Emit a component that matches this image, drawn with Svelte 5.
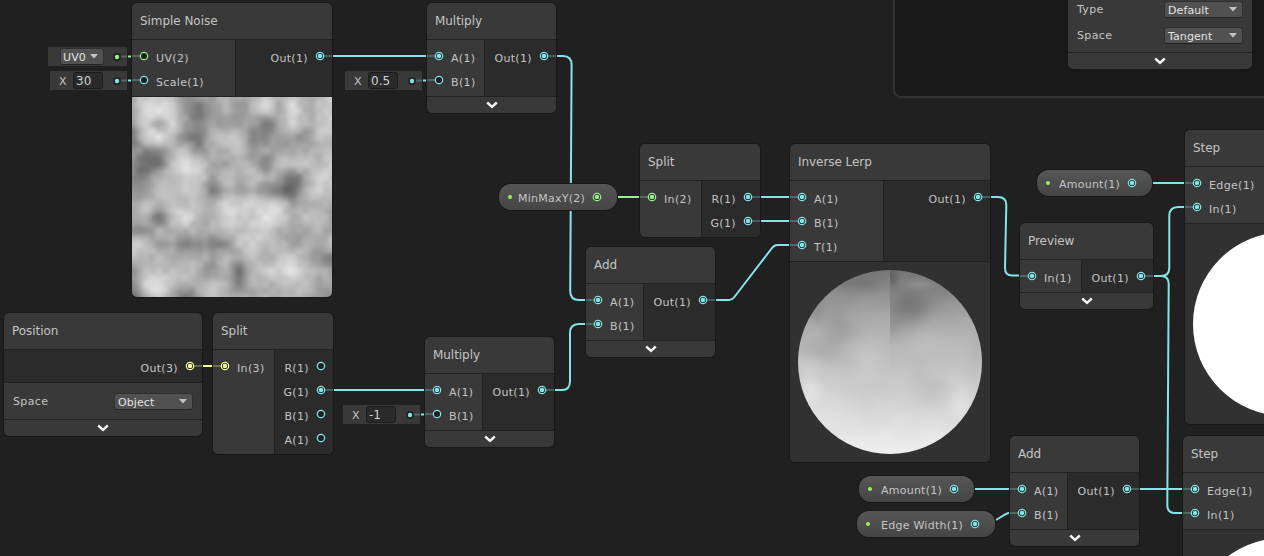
<script>
  import { onMount } from 'svelte';

  const CYAN = '#84e4e7';
  const GREEN = '#9aef92';
  const YELLOW = '#f6ff9a';

  const i = (label, o = {}) => ({ label, on: true, color: CYAN, ...o });

  const nodes = [
    { title: 'Simple Noise', x: 132, y: 3, w: 200, split: 103, ins: [i('UV(2)', { on: false, stub: true, color: GREEN }), i('Scale(1)', { on: false, stub: true })], outs: [i('Out(1)')], preview: 'noise' },
    { title: 'Multiply', x: 427, y: 3, w: 129, split: 57, ins: [i('A(1)'), i('B(1)', { on: false, stub: true })], outs: [i('Out(1)')], fold: true },
    { title: 'Split', x: 640, y: 144, w: 120, split: 61, ins: [i('In(2)', { color: GREEN })], outs: [i('R(1)'), i('G(1)')] },
    { title: 'Inverse Lerp', x: 790, y: 144, w: 200, split: 93, ins: [i('A(1)'), i('B(1)'), i('T(1)')], outs: [i('Out(1)')], preview: 'sphere' },
    { title: 'Add', x: 586, y: 247, w: 129, split: 57, ins: [i('A(1)'), i('B(1)')], outs: [i('Out(1)')], fold: true },
    { title: 'Position', x: 4, y: 313, w: 198, split: 0, ins: [], outs: [i('Out(3)', { color: YELLOW })], fields: [['Space', 'Object']], fold: true },
    { title: 'Split', x: 213, y: 313, w: 120, split: 61, ins: [i('In(3)', { color: YELLOW })], outs: [i('R(1)', { on: false }), i('G(1)'), i('B(1)', { on: false }), i('A(1)', { on: false })] },
    { title: 'Multiply', x: 425, y: 337, w: 129, split: 57, ins: [i('A(1)'), i('B(1)', { on: false, stub: true })], outs: [i('Out(1)')], fold: true },
    { title: 'Preview', x: 1020, y: 223, w: 133, split: 61, ins: [i('In(1)')], outs: [i('Out(1)')], fold: true },
    { title: 'Step', x: 1185, y: 130, w: 200, split: 103, ins: [i('Edge(1)'), i('In(1)')], outs: [], preview: 'white' },
    { title: 'Step', x: 1183, y: 436, w: 200, split: 103, ins: [i('Edge(1)'), i('In(1)')], outs: [], preview: 'white' },
    { title: 'Add', x: 1010, y: 436, w: 129, split: 57, ins: [i('A(1)'), i('B(1)')], outs: [i('Out(1)')], fold: true }
  ];

  const pills = [
    { label: 'MinMaxY(2)', x: 499, y: 184, w: 118, color: GREEN },
    { label: 'Amount(1)', x: 1037, y: 170, w: 115, color: CYAN },
    { label: 'Amount(1)', x: 859, y: 476, w: 115, color: CYAN },
    { label: 'Edge Width(1)', x: 857, y: 511, w: 138, color: CYAN }
  ];

  const slots = [
    { x: 48, y: 47, w: 79, menu: 'UV0', color: GREEN },
    { x: 50, y: 71, w: 77, value: '30', color: CYAN },
    { x: 345, y: 71, w: 77, value: '0.5', color: CYAN },
    { x: 343, y: 405, w: 77, value: '-1', color: CYAN }
  ];

  const wires = [
    { d: 'M333 56H426' },
    { d: 'M557 56H563Q571.6 56 571.6 65L570.2 291Q570.2 300 579 300H585' },
    { d: 'M555 390H562Q570 390 570 381V333Q570 324 579 324H585' },
    { d: 'M716 300H729Q732 300 734 297.500L772 248Q774.500 245 777 245H789' },
    { d: 'M618 197H639', c: GREEN },
    { d: 'M761 197H789' },
    { d: 'M761 221H789' },
    { d: 'M203 366H212', c: YELLOW },
    { d: 'M334 390H424' },
    { d: 'M991 197H998Q1006.300 197 1006.300 205L1005 268Q1005 275.500 1012 275.500H1019' },
    { d: 'M1154 276H1161Q1169.300 276 1169.300 268V216Q1169.300 207 1178 207H1184' },
    { d: 'M1154 276H1161Q1168.700 276 1168.700 284L1167.300 505Q1167.300 513 1175 513H1182' },
    { d: 'M1153 183H1184' },
    { d: 'M975 489H1009' },
    { d: 'M996 520L1006 514Q1008 513 1009 513' },
    { d: 'M1140 489H1182' }
  ];

  // brightness lattice of the noise preview, 0 dark to 9 light
  const lattice = [
    '6887445656868678',
    '6998424646869678',
    '5868535555258678',
    '2897326773355477',
    '4346746674555667',
    '3127985566377778',
    '3367885767652588',
    '4477873656421687',
    '5767776888885666',
    '5627966888986775',
    '4466666778865565',
    '8755343478775657',
    '7676665657678643',
    '4777764626889765',
    '3897667636677755',
    '1685257665666653'
  ].map((r) => [...r].map(Number));

  let noiseCanvas;
  let sphereCanvas;

  function random(x, y) {
    const v = Math.sin(x * 12.9898 + y * 78.233) * 43758.5453;
    return v - Math.floor(v);
  }

  const clamp = (v) => Math.max(0, Math.min(15, v));

  const cubic = (a, b, c, d, t) =>
    b + 0.5 * t * (c - a + t * (2 * a - 5 * b + 4 * c - d + t * (3 * (b - c) + d - a)));

  function smooth(x, y) {
    const ix = Math.floor(x), iy = Math.floor(y);
    const rows = [-1, 0, 1, 2].map((dy) => {
      const r = lattice[clamp(iy + dy)];
      return cubic(r[clamp(ix - 1)], r[clamp(ix)], r[clamp(ix + 1)], r[clamp(ix + 2)], x - ix);
    });
    return cubic(...rows, y - iy);
  }

  function sample(at, x, y) {
    const ix = Math.floor(x), iy = Math.floor(y);
    let fx = x - ix, fy = y - iy;
    fx = fx * fx * (3 - 2 * fx);
    fy = fy * fy * (3 - 2 * fy);
    const a = at(ix, iy) * (1 - fx) + at(ix + 1, iy) * fx;
    const b = at(ix, iy + 1) * (1 - fx) + at(ix + 1, iy + 1) * fx;
    return a * (1 - fy) + b * fy;
  }

  const noiseShade = (x, y) =>
    92 + 14 * smooth(x / 13.334, y / 13.334) + 18 * (sample(random, x / 6.667, y / 6.667) - 0.5);

  function paint(canvas, size, shade) {
    const ctx = canvas.getContext('2d');
    const img = ctx.createImageData(size, size);
    for (let y = 0; y < size; y++)
      for (let x = 0; x < size; x++) {
        const g = shade(x, y), p = (y * size + x) * 4;
        img.data[p] = img.data[p + 1] = img.data[p + 2] = g;
        img.data[p + 3] = 255;
      }
    ctx.putImageData(img, 0, 0);
  }

  // x, y, radius x, radius y, strength
  const leftBlobs = [[40, 60, 16, 20, -16], [20, 82, 18, 10, -12], [60, 14, 26, 8, -12], [18, 42, 8, 12, -14], [72, 80, 18, 22, 8], [10, 115, 12, 24, 16], [30, 130, 20, 20, 6]];
  const rightBlobs = [[112, 36, 24, 18, -34], [93, 8, 7, 10, -26], [94, 54, 16, 16, -18], [155, 20, 20, 9, -10], [132, 65, 14, 12, 7], [132, 120, 20, 16, -12], [160, 128, 12, 20, 12], [120, 14, 12, 5, 14], [178, 85, 8, 18, -8]];
  const stops = [[0, 118], [25, 146], [50, 170], [80, 187], [110, 200], [140, 215], [165, 228], [184, 242]];

  function sphereShade(x, y) {
    let k = 0;
    while (k < stops.length - 2 && y > stops[k + 1][0]) k++;
    const [y0, g0] = stops[k], [y1, g1] = stops[k + 1];
    let g = g0 + ((g1 - g0) * (y - y0)) / (y1 - y0);
    for (const [bx, by, rx, ry, s] of x < 92 ? leftBlobs : rightBlobs)
      g += s * Math.exp(-(((x - bx) / rx) ** 2) - ((y - by) / ry) ** 2);
    return g + 6 * (sample(random, x / 17, y / 15) - 0.5);
  }

  onMount(() => {
    paint(noiseCanvas, 200, noiseShade);
    paint(sphereCanvas, 184, sphereShade);
  });
</script>

{#snippet port(p, side)}
  <svg class="port" width="24" height="24" viewBox="0 0 24 24">
    {#if side !== 'none' && (p.on || p.stub)}
      <path d={side === 'in' ? 'M0 12H8' : 'M16 12H24'} stroke={p.color} stroke-opacity=".28" stroke-width="2" />
    {/if}
    <circle cx="12" cy="12" r="3.700" fill="#212121" stroke={p.color} stroke-width="1.200" />
    {#if p.on}<circle cx="12" cy="12" r="2.300" fill={p.color} />{/if}
  </svg>
{/snippet}

{#snippet menu(text)}
  <span class="menu"><span>{text}</span><svg width="8" height="5" viewBox="0 0 8 5"><path d="M0 0H8L4 4.500Z" fill="#c4c4c4" /></svg></span>
{/snippet}

{#snippet fold()}
  <div class="fold"><svg width="12" height="8" viewBox="0 0 12 8"><path d="M1.200 1.500L6 5.800L10.800 1.500" fill="none" stroke="#f2f2f2" stroke-width="2.400" /></svg></div>
{/snippet}

<main>
  <section class="context">
    <div class="node block">
      <div class="fields">
        <div class="field"><span>Type</span>{@render menu('Default')}</div>
        <div class="field"><span>Space</span>{@render menu('Tangent')}</div>
      </div>
      {@render fold()}
    </div>
  </section>

  <svg class="wires" width="1264" height="556" viewBox="0 0 1264 556">
    {#each wires as w}
      <path d={w.d} fill="none" stroke={w.c ?? CYAN} stroke-width="2" />
    {/each}
  </svg>

  {#each slots as s}
    <div class="slot" style:left="{s.x}px" style:top="{s.y}px" style:width="{s.w}px">
      {#if s.menu}
        {@render menu(s.menu)}
      {:else}
        <span class="axis">X</span><span class="value">{s.value}</span>
      {/if}
      <svg class="plug" width="20" height="19" viewBox="0 0 20 19">
        <path d="M5 9.500H15" stroke={s.color} stroke-opacity=".28" stroke-width="2" />
        <path d="M16 9.500H19.500" stroke={s.color} stroke-width="2" />
        <circle cx="5" cy="10" r="4" fill="#212121" />
        <circle cx="5" cy="10" r="2.200" fill={s.color} />
      </svg>
    </div>
  {/each}

  {#each nodes as n}
    <article class="node" style:left="{n.x}px" style:top="{n.y}px" style:width="{n.w}px">
      <header>{n.title}</header>
      <div class="body">
        {#if n.split}
          <div class="ins" style:width="{n.split}px">
            {#each n.ins as p}<div class="row">{@render port(p, 'in')}<span>{p.label}</span></div>{/each}
          </div>
        {/if}
        <div class="outs" class:divided={n.split > 0}>
          {#each n.outs as p}<div class="row"><span>{p.label}</span>{@render port(p, 'out')}</div>{/each}
        </div>
      </div>
      {#if n.fields}
        <div class="fields">
          {#each n.fields as [name, value]}<div class="field"><span>{name}</span>{@render menu(value)}</div>{/each}
        </div>
      {/if}
      {#if n.preview === 'noise'}
        <div class="preview"><canvas bind:this={noiseCanvas} width="200" height="200"></canvas></div>
      {:else if n.preview === 'sphere'}
        <div class="preview"><canvas class="ball" bind:this={sphereCanvas} width="184" height="184"></canvas></div>
      {:else if n.preview}
        <div class="preview"><div class="ball white"></div></div>
      {/if}
      {#if n.fold}{@render fold()}{/if}
    </article>
  {/each}

  {#each pills as p}
    <div class="pill" style:left="{p.x}px" style:top="{p.y}px" style:width="{p.w}px">
      <i></i><span>{p.label}</span>
      {@render port({ on: true, color: p.color }, 'none')}
    </div>
  {/each}
</main>

<style>
  :global(body) { margin: 0; background: #202020; }
  main {
    position: relative;
    width: 1264px;
    height: 556px;
    overflow: hidden;
    background: #202020;
    color: #c4c4c4;
    font: 11px/16px "DejaVu Sans", Verdana, sans-serif;
  }
  svg, canvas { display: block; }
  .wires { position: absolute; inset: 0; }
  .context {
    position: absolute;
    left: 893px;
    top: -20px;
    width: 400px;
    height: 114px;
    border: 2px solid #333;
    border-radius: 8px;
    background: #191919;
  }
  .node {
    position: absolute;
    border-radius: 5px;
    background: #393939;
    box-shadow: 0 0 0 1px #191919;
    overflow: hidden;
  }
  .block { left: 173px; top: 0; width: 184px; padding-top: 8px; }
  header {
    height: 36px;
    box-sizing: border-box;
    padding: 0 8px;
    font-size: 12px;
    line-height: 37px;
    letter-spacing: -0.05px;
  }
  .body { display: flex; border-top: 1px solid #222; }
  .ins, .outs { padding: 4px 0; box-sizing: border-box; }
  .ins { flex: none; }
  .outs { flex: 1; background: #2b2b2b; }
  .divided { border-left: 1px solid #222; }
  .row { display: flex; height: 24px; white-space: nowrap; }
  .row span { line-height: 29px; letter-spacing: 0.35px; }
  .outs .row { justify-content: flex-end; }
  .port { flex: none; }
  .fields { padding: 5px 9px; border-top: 1px solid #222; }
  .block .fields { padding-bottom: 4px; }
  .field { display: flex; align-items: center; justify-content: space-between; height: 26px; letter-spacing: 0.35px; }
  .field > span:first-child { padding-top: 1px; }
  .menu {
    display: flex;
    align-items: center;
    justify-content: space-between;
    box-sizing: border-box;
    width: 79px;
    height: 17px;
    padding: 0 5px 0 3px;
    border: 1px solid #303030;
    border-bottom-color: #242424;
    border-radius: 3px;
    background: #515151;
    color: #e4e4e4;
    letter-spacing: 0.1px;
  }
  .menu span { line-height: 15px; padding-top: 2px; }
  .fold {
    display: flex;
    align-items: center;
    justify-content: center;
    height: 16px;
    border-top: 1px solid #222;
  }
  .preview {
    display: grid;
    place-items: center;
    height: 200px;
    border-top: 1px solid #222;
    background: #313131;
  }
  .ball { width: 184px; height: 184px; border-radius: 50%; }
  .white { background: #fff; }
  .slot {
    position: absolute;
    display: flex;
    align-items: center;
    height: 19px;
    background: #393939;
  }
  .slot .menu { width: 44px; margin-left: 12px; padding: 0 5px 0 2px; }
  .axis { width: 23px; padding: 2px 0 0 9px; box-sizing: border-box; }
  .value {
    box-sizing: border-box;
    width: 30px;
    height: 17px;
    padding-left: 2px;
    border: 1px solid #1b1b1b;
    border-radius: 3px;
    background: #2a2a2a;
    color: #d0d0d0;
    font-size: 12px;
    line-height: 17px;
  }
  .plug { flex: none; margin: 0 -5px 0 auto; }
  .pill {
    position: absolute;
    display: flex;
    align-items: center;
    height: 26px;
    border-radius: 12px;
    box-sizing: border-box;
    padding: 0 8px 0 9px;
    background: linear-gradient(#565656, #454545);
    box-shadow: 0 0 0 1px #191919;
    white-space: nowrap;
  }
  .pill i { flex: none; width: 4px; height: 4px; border-radius: 2px; background: #98f060; }
  .pill span { flex: 1; padding-top: 4px; text-align: right; letter-spacing: 0.25px; }
</style>
